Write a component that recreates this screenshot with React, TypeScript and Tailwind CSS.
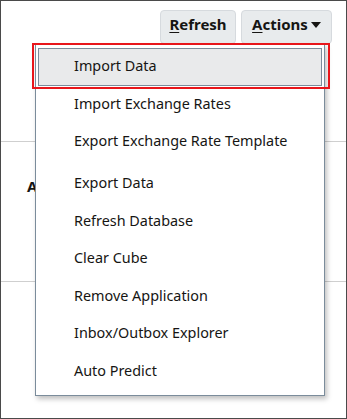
import React from 'react';

const items = [
  'Import Data',
  'Import Exchange Rates',
  'Export Exchange Rate Template',
  null,
  'Export Data',
  'Refresh Database',
  'Clear Cube',
  'Remove Application',
  'Inbox/Outbox Explorer',
  'Auto Predict',
];

export default function App() {
  return (
    <div
      className="relative w-[347px] h-[419px] bg-white border border-[#4a4a4a] overflow-hidden text-[#161513]"
      style={{ fontFamily: '"Noto Sans", "Open Sans", Arial, sans-serif' }}
    >
      {/* Toolbar */}
      <div className="flex justify-end gap-[5px] pt-[9px] pr-[14px]">
        <button className="w-[76px] h-[34px] pb-[6px] rounded-[4px] border border-[#d6dade] bg-[#e8ebed] text-[15px] font-bold leading-none">
          <span className="underline underline-offset-2">R</span>efresh
        </button>
        <button className="w-[91px] h-[34px] pb-[6px] rounded-[4px] border border-[#d6dade] bg-[#e8ebed] text-[15px] font-bold leading-none flex items-center justify-center gap-[3px]">
          <span>
            <span className="underline underline-offset-2">A</span>ctions
          </span>
          <svg width="10" height="6" viewBox="0 0 10 6" className="mt-[2px]">
            <path d="M0 0h10L5 6z" fill="#161513" />
          </svg>
        </button>
      </div>

      {/* Page behind the menu */}
      <div className="mt-[97px] border-t border-[#cfcfcf]" />
      <div className="pl-[26px] mt-[37px] text-[15px] font-bold leading-none">Actual</div>
      <div className="mt-[87px] border-t border-[#cfcfcf]" />

      {/* Dropdown menu */}
      <div className="absolute left-[34px] top-[43px] w-[290px] h-[352px] bg-white border border-[#7b8c9b] shadow-[2px_3px_5px_rgba(0,0,0,0.25)] pt-[3px]">
        {items.map((label, i) =>
          label === null ? (
            <div key={i} className="h-[4.5px]" />
          ) : (
            <div
              key={i}
              className={`h-[37.5px] mx-[2px] flex items-center pb-[1px] text-[14.4px] ${
                i === 0 ? 'bg-[#e9eaeb] border border-[#7b8c9b] pl-[35px]' : 'pl-[36px]'
              }`}
            >
              {label}
            </div>
          )
        )}
      </div>

      {/* Highlight annotation */}
      <div className="absolute left-[31px] top-[42px] w-[298px] h-[46px] border-2 border-[#e8161b] pointer-events-none" />
    </div>
  );
}
